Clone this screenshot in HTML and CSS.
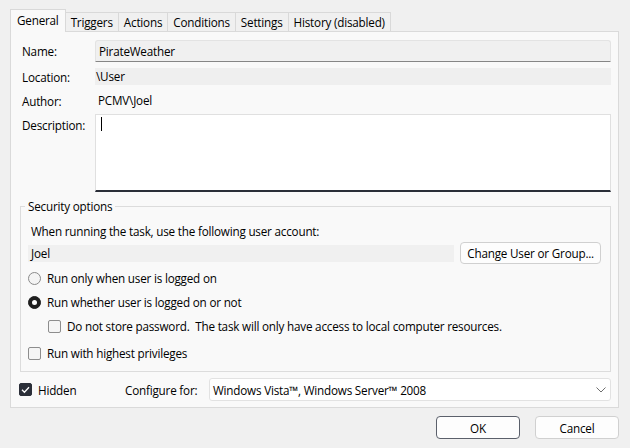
FILE: index.html
```html
<!DOCTYPE html>
<html>
<head>
<meta charset="utf-8">
<link rel="stylesheet" href="styles.css">
</head>
<body>
<div class="dialog">
  <div class="tabs">
    <div class="tab active">General</div>
    <div class="tab">Triggers</div>
    <div class="tab">Actions</div>
    <div class="tab">Conditions</div>
    <div class="tab">Settings</div>
    <div class="tab">History (disabled)</div>
  </div>
  <div class="panel">
    <div class="form">
      <div class="label">Name:</div>
      <div class="field edit">PirateWeather</div>
      <div class="label row2">Location:</div>
      <div class="field readonly row2">\User</div>
      <div class="label row3">Author:</div>
      <div class="field plain row3">PCMV\Joel</div>
      <div class="label row4 top">Description:</div>
      <div class="textarea row4"><span class="caret"></span></div>
    </div>
    <fieldset class="group">
      <legend>Security options</legend>
      <div class="line">When running the task, use the following user account:</div>
      <div class="account">
        <div class="account-field">Joel</div>
        <button class="btn change">Change User or Group...</button>
      </div>
      <div class="opt first"><span class="radio"></span>Run only when user is logged on</div>
      <div class="opt second"><span class="radio checked"></span>Run whether user is logged on or not</div>
      <div class="opt third indent"><span class="check"></span>Do not store password.  The task will only have access to local computer resources.</div>
      <div class="opt fourth"><span class="check"></span>Run with highest privileges</div>
    </fieldset>
    <div class="footer-row">
      <div class="hidden-opt"><span class="check checked"><svg width="13" height="13" viewBox="0 0 13 13"><polyline points="3,6.8 5.4,9.2 10,4.2" fill="none" stroke="#fff" stroke-width="1.3"/></svg></span>Hidden</div>
      <div class="config-label">Configure for:</div>
      <div class="combo">
        <span>Windows Vista™, Windows Server™ 2008</span>
        <svg class="chev" width="10" height="6" viewBox="0 0 10 6"><polyline points="0.5,0.5 5,5 9.5,0.5" fill="none" stroke="#6e6e6e" stroke-width="1"/></svg>
      </div>
    </div>
  </div>
  <div class="buttons">
    <button class="btn dlg default">OK</button>
    <button class="btn dlg">Cancel</button>
  </div>
</div>
</body>
</html>
```
FILE: styles.css
```css
html, body {
  margin: 0;
  padding: 0;
}
body {
  background: #f0f0f0;
  font-family: "Open Sans", "Noto Sans", sans-serif;
  font-size: 11.7px;
  letter-spacing: -0.2px;
  line-height: 16px;
  color: #000;
}
.dialog {
  width: 630px;
  height: 448px;
  box-sizing: border-box;
  padding: 9px 11px 0 10px;
}
.tabs {
  display: flex;
  align-items: flex-end;
  height: 22px;
}
.tab {
  height: 19px;
  box-sizing: border-box;
  padding: 1px 5px 0 5px;
  border: 1px solid #d9d9d9;
  border-bottom: none;
  background: #f0f0f0;
  margin-left: -1px;
  white-space: nowrap;
}
.tab.active {
  height: 23px;
  margin-bottom: -1px;
  margin-left: 0;
  padding: 2px 6px 0 6px;
  background: #f9f9f9;
  position: relative;
  z-index: 1;
}
.panel {
  height: 377px;
  box-sizing: border-box;
  border: 1px solid #dadada;
  background: #f9f9f9;
  padding: 8px 7px 6px 9px;
}
.form {
  display: grid;
  grid-template-columns: 73px 1fr;
  padding-left: 2px;
}
.label {
  align-self: center;
  white-space: nowrap;
}
.label.top {
  align-self: start;
}
.row2 { margin-top: 6px; }
.row3 { margin-top: 7px; }
.row4 { margin-top: 5px; }
.label.row2, .label.row3 { margin-top: 0; }
.label.row2 { padding-top: 6px; }
.label.row3 { padding-top: 7px; }
.label.row4 { margin-top: 5px; padding-top: 3px; }
.field {
  box-sizing: border-box;
  white-space: nowrap;
}
.field.edit {
  height: 22px;
  background: #f0f0f0;
  border: 1px solid #e3e3e3;
  border-bottom-color: #868686;
  border-radius: 3px 3px 0 0;
  padding: 2px 3px 0 3px;
}
.field.readonly {
  height: 17px;
  background: #efefef;
  padding: 0 0 0 1px;
}
.field.plain {
  height: 17px;
  padding: 0 0 0 3px;
}
.textarea {
  height: 78px;
  box-sizing: border-box;
  background: #fff;
  border: 1px solid #e0e0e0;
  border-bottom: 2px solid #2a2e38;
  padding: 2px 5px;
}
.caret {
  display: block;
  width: 1px;
  height: 14px;
  background: #000;
}
.group {
  margin: 6px 0 0 0;
  border: 1px solid #dcdcdc;
  padding: 9px 9px 10px 7px;
  min-width: 0;
}
.group legend {
  padding: 0 3px;
  margin-left: -3px;
  line-height: 16px;
}
.line {
  padding-left: 3px;
  height: 16px;
}
.account {
  display: flex;
  align-items: flex-start;
  margin-top: 2px;
  height: 23px;
}
.account-field {
  flex: 1;
  height: 17px;
  margin-top: 4px;
  background: #f0f0f0;
  padding-left: 3px;
}
.btn {
  font: inherit;
  letter-spacing: inherit;
  color: #000;
  background: #fdfdfd;
  border: 1px solid #d0d0d0;
  border-radius: 4px;
  box-sizing: border-box;
  padding: 0;
  margin: 0;
}
.btn.change {
  height: 22px;
  margin: 1px 0 0 6px;
  padding: 0 6px;
  white-space: nowrap;
}
.opt {
  display: flex;
  align-items: center;
  height: 16px;
  white-space: pre;
}
.opt.first { margin-top: 6px; }
.opt.second { margin-top: 8px; }
.opt.third { margin-top: 8px; }
.opt.fourth { margin-top: 11px; }
.opt.indent { padding-left: 20px; }
.radio {
  width: 13px;
  height: 13px;
  box-sizing: border-box;
  border: 1px solid #8a8a8a;
  border-radius: 50%;
  background: #f4f4f4;
  margin-right: 6px;
  flex: none;
  position: relative;
}
.radio.checked {
  background: #1f1f1f;
  border-color: #1f1f1f;
}
.radio.checked::after {
  content: "";
  position: absolute;
  left: 3px;
  top: 3px;
  width: 5px;
  height: 5px;
  border-radius: 50%;
  background: #fff;
}
.check {
  width: 13px;
  height: 13px;
  box-sizing: border-box;
  border: 1px solid #8d8d8d;
  border-radius: 2px;
  background: #f5f5f5;
  margin-right: 6px;
  flex: none;
  position: relative;
}
.check.checked {
  background: #2b2f39;
  border-color: #2b2f39;
}
.check.checked svg {
  position: absolute;
  left: -1px;
  top: -1px;
}
.footer-row {
  display: flex;
  align-items: center;
  margin-top: 6px;
  height: 23px;
}
.hidden-opt {
  display: flex;
  align-items: center;
  width: 106px;
  margin-left: -1px;
}
.config-label {
  width: 84px;
  white-space: nowrap;
}
.combo {
  flex: 1;
  height: 23px;
  box-sizing: border-box;
  background: #fff;
  border: 1px solid #e2e2e2;
  border-radius: 3px;
  display: flex;
  align-items: center;
  justify-content: space-between;
  padding: 0 4px 0 3px;
  white-space: nowrap;
}
.chev {
  display: block;
}
.buttons {
  display: flex;
  justify-content: flex-end;
  gap: 15px;
  margin-top: 8px;
}
.btn.dlg {
  width: 84px;
  height: 23px;
}
.btn.default {
  border-color: #5b606b;
}
```
